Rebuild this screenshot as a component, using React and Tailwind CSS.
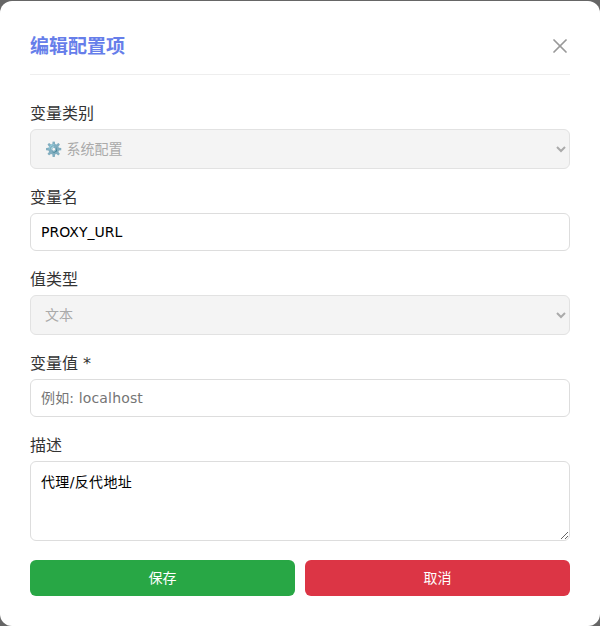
import { X } from 'lucide-react';

const Field = ({ label, children }) => (
    <div className="mb-[17px]">
        <label className="block mb-[3px] text-base leading-[24px] text-[#333]">{label}</label>
        {children}
    </div>
);

const App = () => {
    return (
        <div className="w-[600px] h-[626px] pt-px bg-[#666] font-['DejaVu_Sans','Noto_Sans_CJK_SC',sans-serif]">
            <div className="w-[600px] h-[625px] bg-white rounded-[12px] px-[30px] pt-[30px]">
                <div className="flex items-center justify-between pb-[13px] mb-[27px] border-b border-[#eee]">
                    <h3 className="text-[19px] leading-[30px] font-bold text-[#667eea]">编辑配置项</h3>
                    <button className="text-[#999] -mr-[2px]"><X size={24} strokeWidth={1.75} /></button>
                </div>
                <Field label="变量类别">
                    <select disabled className="w-full h-[40px] px-[10px] text-sm text-[#aaa] bg-[#f4f4f4] border border-[#e2e2e2] rounded-md">
                        <option>⚙️ 系统配置</option>
                    </select>
                </Field>
                <Field label="变量名">
                    <input defaultValue="PROXY_URL" className="block w-full h-[38px] px-[10px] text-sm text-black border border-[#ddd] rounded-md" />
                </Field>
                <Field label="值类型">
                    <select disabled className="w-full h-[40px] px-[10px] text-sm text-[#aaa] bg-[#f4f4f4] border border-[#e2e2e2] rounded-md">
                        <option>文本</option>
                    </select>
                </Field>
                <Field label="变量值 *">
                    <input placeholder="例如: localhost" className="block w-full h-[38px] px-[10px] text-sm tracking-[0.15px] border border-[#ddd] rounded-md placeholder:text-[#757575]" />
                </Field>
                <Field label="描述">
                    <textarea defaultValue="代理/反代地址" className="block w-full h-[80px] px-[10px] py-[10px] text-sm tracking-[0.35px] text-black border border-[#ddd] rounded-md" />
                </Field>
                <div className="flex gap-[10px] mt-[19px]">
                    <button className="flex-1 h-[36px] bg-[#28a745] text-white text-sm rounded-md">保存</button>
                    <button className="flex-1 h-[36px] bg-[#dc3545] text-white text-sm rounded-md">取消</button>
                </div>
            </div>
        </div>
    );
};

export default App;
